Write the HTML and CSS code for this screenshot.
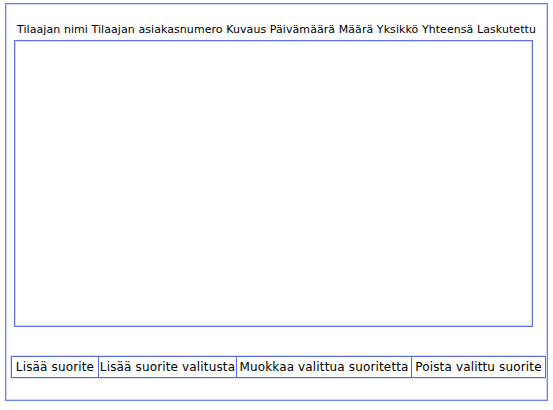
FILE: index.html
```html
<!DOCTYPE html>
<html>
<head>
<meta charset="utf-8">
<link rel="stylesheet" href="styles.css">
</head>
<body>
<div class="frame">
  <div class="header">Tilaajan nimi Tilaajan asiakasnumero Kuvaus Päivämäärä Määrä Yksikkö Yhteensä Laskutettu</div>
  <div class="table-box"></div>
  <div class="buttons">
    <div class="btn">Lisää suorite</div>
    <div class="btn">Lisää suorite valitusta</div>
    <div class="btn">Muokkaa valittua suoritetta</div>
    <div class="btn">Poista valittu suorite</div>
  </div>
</div>
</body>
</html>
```
FILE: styles.css
```css
html, body {
  margin: 0;
  padding: 0;
  background: #ffffff;
}
body {
  font-family: "DejaVu Sans", "Liberation Sans", sans-serif;
  color: #000;
}
.frame {
  margin: 3px 0 0 5px;
  width: 541px;
  height: 396px;
  border: 1px solid #6f82ec;
  box-shadow: inset 0 0 0 1px #c9d1f8;
}
.header {
  margin-top: 19px;
  font-size: 11px;
  line-height: 14px;
  text-align: center;
  white-space: nowrap;
  letter-spacing: 0.07px;
}
.table-box {
  margin: 3px 0 0 8px;
  width: 517px;
  height: 285px;
  border: 1px solid #5f73e6;
  box-shadow: inset 0 0 0 1px #cfd6f9;
}
.buttons {
  margin: 29px 0 0 5px;
  width: 533px;
  height: 20px;
  border: 1px solid #5468e0;
  box-shadow: 0 0 0 1px #dce1fb;
  display: grid;
  grid-template-columns: 87px 138px 175px 1fr;
}
.btn {
  border-right: 1px solid #5468e0;
  font-size: 12px;
  line-height: 20px;
  text-align: center;
  white-space: nowrap;
  letter-spacing: 0.15px;
}
.btn:last-child {
  border-right: none;
}
```
